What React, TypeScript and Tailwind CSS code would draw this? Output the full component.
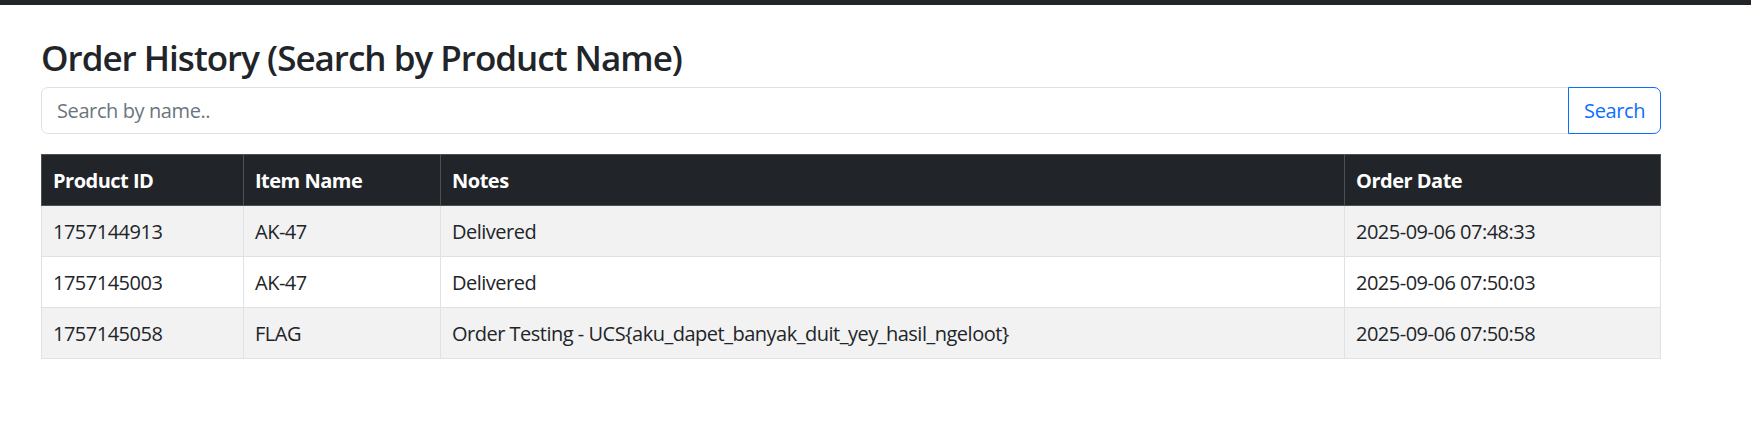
import React from 'react';

interface Order {
  id: string;
  item: string;
  notes: string;
  date: string;
}

const orders: Order[] = [
  { id: '1757144913', item: 'AK-47', notes: 'Delivered', date: '2025-09-06 07:48:33' },
  { id: '1757145003', item: 'AK-47', notes: 'Delivered', date: '2025-09-06 07:50:03' },
  {
    id: '1757145058',
    item: 'FLAG',
    notes: 'Order Testing - UCS{aku_dapet_banyak_duit_yey_hasil_ngeloot}',
    date: '2025-09-06 07:50:58',
  },
];

const App: React.FC = () => {
  return (
    <div className="min-h-screen bg-white text-[#212529] font-['Open_Sans',sans-serif]">
      <div className="h-[5px] bg-[#212529]" />

      <div className="ml-[41px] w-[1620px] pt-[32px]">
        <h3 className="text-[35px] leading-[42px] font-semibold tracking-[-1px] mb-[8px]">
          Order History (Search by Product Name)
        </h3>

        <div className="flex mb-[20px]">
          <input
            type="text"
            placeholder="Search by name.."
            className="flex-1 h-[47px] px-[15px] text-[20px] tracking-[-0.4px] border border-[#dee2e6] rounded-l-[7px] outline-none placeholder:text-[#6c757d]"
          />
          <button className="h-[47px] px-[15px] text-[20px] tracking-[-0.4px] text-[#0d6efd] border border-[#0d6efd] rounded-r-[7px] -ml-px">
            Search
          </button>
        </div>

        <table className="w-full border-collapse text-[20px] leading-[30px] tracking-[-0.5px]">
          <thead>
            <tr className="bg-[#212529] text-white">
              <th className="w-[202px] text-left font-bold px-[11px] pt-[11px] pb-[9px] border border-[#4d5154]">Product ID</th>
              <th className="w-[197px] text-left font-bold px-[11px] pt-[11px] pb-[9px] border border-[#4d5154]">Item Name</th>
              <th className="w-[904px] text-left font-bold px-[11px] pt-[11px] pb-[9px] border border-[#4d5154]">Notes</th>
              <th className="text-left font-bold px-[11px] pt-[11px] pb-[9px] border border-[#4d5154]">Order Date</th>
            </tr>
          </thead>
          <tbody>
            {orders.map((o, i) => (
              <tr key={o.id} className={i % 2 === 0 ? 'bg-[#f2f2f2]' : 'bg-white'}>
                <td className="px-[11px] pt-[11px] pb-[9px] border border-[#dee2e6]">{o.id}</td>
                <td className="px-[11px] pt-[11px] pb-[9px] border border-[#dee2e6]">{o.item}</td>
                <td className="px-[11px] pt-[11px] pb-[9px] border border-[#dee2e6]">{o.notes}</td>
                <td className="px-[11px] pt-[11px] pb-[9px] border border-[#dee2e6]">{o.date}</td>
              </tr>
            ))}
          </tbody>
        </table>
      </div>
    </div>
  );
};

export default App;
